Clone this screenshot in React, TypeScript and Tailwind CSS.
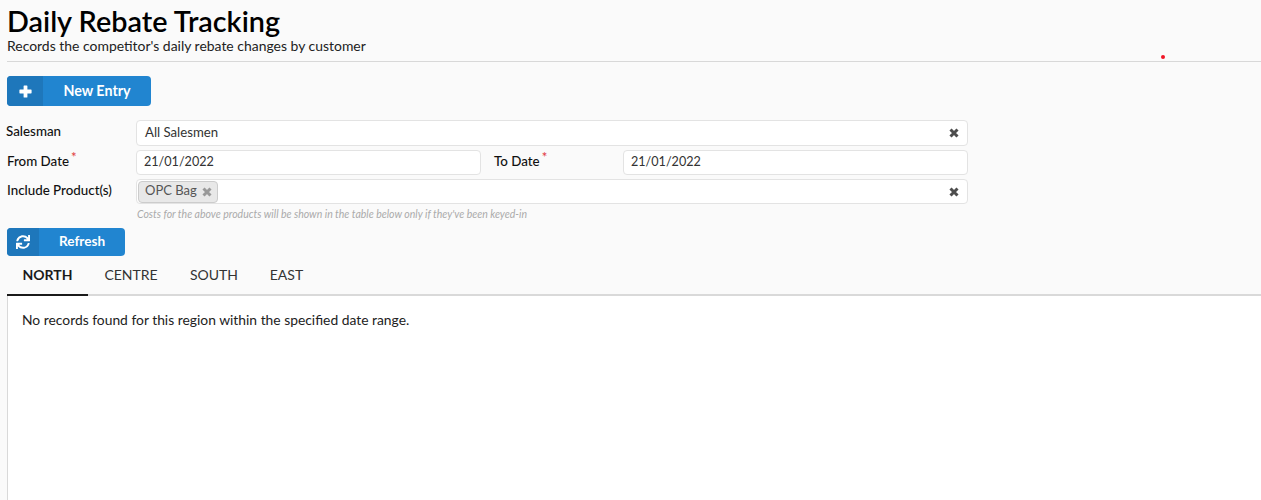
import { FaSync } from "react-icons/fa";

const X = ({ className }: { className: string }) => (
  <svg viewBox="0 0 10 10" className={className} fill="none" stroke="currentColor" strokeWidth="3">
    <path d="M1.5 1.5L8.5 8.5M8.5 1.5L1.5 8.5" />
  </svg>
);

const Field = ({ value, clear, className }: { value: string; clear?: boolean; className: string }) => (
  <div className={`flex items-center bg-white border border-[#e3e3e3] rounded-[4px] text-[#333] ${className}`}>
    <span className="flex-1 -mt-[1px]">{value}</span>
    {clear && <X className="w-[10px] h-[10px] mr-[8px] text-[#4d4d4d]" />}
  </div>
);

const Label = ({ text, req, className }: { text: string; req?: boolean; className: string }) => (
  <div className={`text-[13.35px] font-medium text-[#111] leading-[16px] ${className}`}>
    {text}
    {req && <sup className="text-[#e0393e] ml-[2px] text-[13px] -top-[4px]">*</sup>}
  </div>
);

export default function App() {
  return (
    <div className="min-h-[500px] h-[500px] overflow-hidden bg-[#fafafa] font-['Lato',sans-serif] text-[13px] relative">
      <div className="pl-[7px]">
        <h1 className="text-[28.8px] leading-[34px] pt-[4px] pb-[1px] font-semibold text-black">Daily Rebate Tracking</h1>
        <p className="text-[13.95px] leading-[14px] text-[#222]">Records the competitor's daily rebate changes by customer</p>
        <div className="h-px bg-[#d8d8d8] mt-[8px]" />

        <button className="mt-[14px] flex items-center h-[30px] w-[144px] rounded-[4px] bg-[#2185d0] text-white font-bold text-[14.3px] overflow-hidden">
          <span className="w-[36px] h-full bg-[#1e77bb] flex items-center justify-center">
            <svg viewBox="0 0 13 13" className="w-[13px] h-[13px]" fill="currentColor">
              <path d="M4.6 1a.6.6 0 0 1 .6-.6h2.6a.6.6 0 0 1 .6.6v3.6H12a.6.6 0 0 1 .6.6v2.6a.6.6 0 0 1-.6.6H8.4V12a.6.6 0 0 1-.6.6H5.2a.6.6 0 0 1-.6-.6V8.4H1a.6.6 0 0 1-.6-.6V5.2a.6.6 0 0 1 .6-.6h3.6z" />
            </svg>
          </span>
          <span className="flex-1 text-center">New Entry</span>
        </button>

        <div className="w-[961px] mt-[14px] flex flex-col gap-[4px]">
          <div className="flex items-center">
            <Label text="Salesman" className="w-[129px] -mt-[4px] -ml-[1px] mr-[1px]" />
            <Field value="All Salesmen" clear className="flex-1 h-[26px] pl-[8px] text-[13.2px]" />
          </div>
          <div className="flex items-center">
            <Label text="From Date" req className="w-[129px] -mt-[3px]" />
            <Field value="21/01/2022" className="w-[345px] h-[25px] pl-[7px] text-[12.6px]" />
            <Label text="To Date" req className="w-[129px] pl-[13px] mr-[13px] -mt-[3px]" />
            <Field value="21/01/2022" className="flex-1 h-[25px] pl-[7px] text-[12.6px]" />
          </div>
          <div className="flex items-center">
            <Label text="Include Product(s)" className="w-[129px] -mt-[4px]" />
            <div className="flex-1 h-[25px] flex items-center bg-white border border-[#e3e3e3] rounded-[4px] pl-[1px]">
              <span className="flex items-center h-[22px] pl-[6px] pr-[5px] bg-[#e8e8e8] border border-[#ccc] rounded-[4px] text-[#555] text-[13px]">
                <span className="-mt-[1px]">OPC Bag</span>
                <X className="w-[10px] h-[10px] ml-[5px] text-[#999]" />
              </span>
              <span className="flex-1" />
              <X className="w-[10px] h-[10px] mr-[8px] text-[#4d4d4d]" />
            </div>
          </div>
        </div>
        <p className="pl-[130px] mt-[3px] text-[10.5px] leading-[14px] italic text-[#aaa]">
          Costs for the above products will be shown in the table below only if they've been keyed-in
        </p>

        <button className="mt-[7px] flex items-center h-[28px] w-[118px] rounded-[4px] bg-[#2185d0] text-white font-bold text-[13.6px] overflow-hidden">
          <span className="w-[32px] h-full bg-[#1e77bb] flex items-center justify-center">
            <FaSync className="w-[14px] h-[14px]" />
          </span>
          <span className="flex-1 text-center -mt-[2px]">Refresh</span>
        </button>

        <div className="flex mt-[1px] h-[39px] border-b-2 border-[#d9d9d9] text-[14px] text-[#333]">
          <div className="w-[81px] h-[39px] border-b-2 border-[#1a1a1a] flex items-center justify-center font-bold text-[#1a1a1a] pb-[2px]">NORTH</div>
          <div className="w-[86px] flex items-center justify-center pb-[2px]">CENTRE</div>
          <div className="w-[80px] flex items-center justify-center pb-[2px]">SOUTH</div>
          <div className="w-[65px] flex items-center justify-center pb-[2px]">EAST</div>
        </div>
        <div className="bg-white border-l border-[#d9d9d9] h-[300px] pl-[14px] pt-[15px] text-[13.85px] leading-[18px] text-[#222]">
          No records found for this region within the specified date range.
        </div>
      </div>
      <span className="absolute left-[1161px] top-[55px] w-[4px] h-[4px] rounded-full bg-[#f01525]" />
    </div>
  );
}
